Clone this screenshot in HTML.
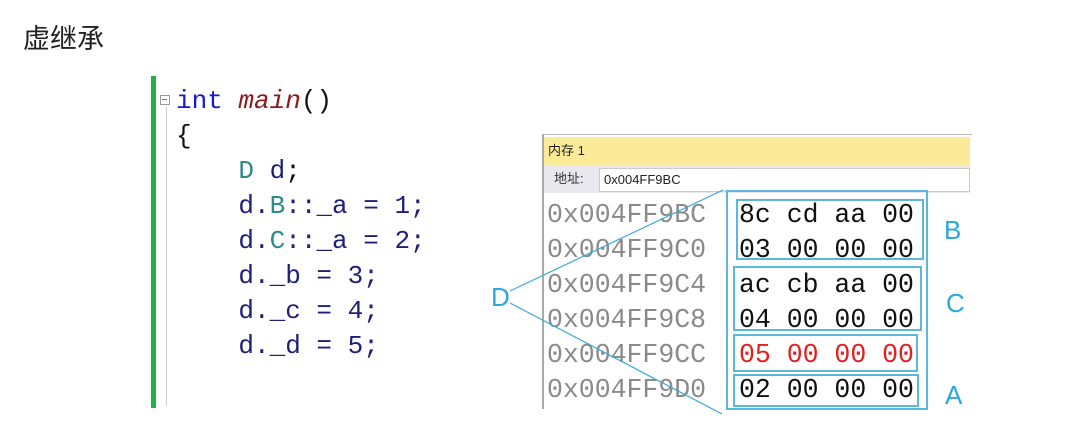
<!DOCTYPE html>
<html><head><meta charset="utf-8"><style>
body{margin:0;width:1066px;height:438px;background:#fff;position:relative;overflow:hidden;font-family:"Liberation Sans","Noto Sans CJK SC",sans-serif}
.a{position:absolute;white-space:pre}
.code{font-family:"Liberation Mono",monospace;font-size:26px;line-height:35px;color:#1f1f7a}
.mem{font-family:"Liberation Mono",monospace;font-size:26.5px;line-height:35px}
.box{position:absolute;border:2px solid #5bb8dc;box-sizing:border-box}
.lbl{position:absolute;color:#29a8e0;font-size:26px;font-family:"Liberation Sans",sans-serif}
</style></head><body>
<div class="a" style="left:23px;top:17px;font-size:27px;color:#222">虚继承</div>
<div class="a" style="left:151px;top:76px;width:5px;height:332px;background:#22b14c"></div>
<div class="a" style="left:166px;top:106px;width:1px;height:300px;background:#ccc"></div>
<div class="a" style="left:160px;top:95px;width:8px;height:8px;border:1px solid #999;background:#fff"></div>
<div class="a" style="left:162px;top:99px;width:5px;height:1px;background:#777"></div>
<div class="a code" style="left:176px;top:84px"><span style="color:#1a1acc">int</span> <i style="color:#8b1a1a">main</i><span style="color:#111">()</span>
<span style="color:#111">{</span>
    <span style="color:#2b8a8a">D</span> d<span style="color:#111">;</span>
    d.<span style="color:#2b8a8a">B</span>::_a = 1;
    d.<span style="color:#2b8a8a">C</span>::_a = 2;
    d._b = 3;
    d._c = 4;
    d._d = 5;</div>
<div class="a" style="left:542px;top:134px;width:428px;height:274px;border-left:2px solid #aaa;border-top:1px solid #bbb;background:#fff"></div>
<div class="a" style="left:544px;top:137px;width:426px;height:28px;background:#fbeb98;font-size:13px;line-height:28px;padding-left:4px;box-sizing:border-box;font-family:'Liberation Sans','Noto Sans CJK SC',sans-serif;color:#222">内存 1</div>
<div class="a" style="left:544px;top:165px;width:426px;height:28px;background:#e8e8ee;font-size:13px;line-height:28px;padding-left:10px;box-sizing:border-box;color:#333">地址:</div>
<div class="a" style="left:599px;top:168px;width:371px;height:24px;background:#fff;border:1px solid #ccc;font-size:13px;line-height:22px;padding-left:4px;box-sizing:border-box;color:#222">0x004FF9BC</div>
<div class="a mem" style="left:547px;top:198px;color:#8a8a8a">0x004FF9BC
0x004FF9C0
0x004FF9C4
0x004FF9C8
0x004FF9CC
0x004FF9D0</div>
<div class="a mem" style="left:739px;top:198px;color:#111">8c cd aa 00
03 00 00 00
ac cb aa 00
04 00 00 00
<span style="color:#e02020">05 00 00 00</span>
02 00 00 00</div>
<div class="box" style="left:726px;top:190px;width:202px;height:220px"></div>
<div class="box" style="left:736px;top:199px;width:188px;height:61px"></div>
<div class="box" style="left:733px;top:266px;width:189px;height:65px"></div>
<div class="box" style="left:733px;top:334px;width:185px;height:38px"></div>
<div class="box" style="left:733px;top:374px;width:186px;height:33px"></div>
<div class="lbl" style="left:944px;top:215px">B</div>
<div class="lbl" style="left:946px;top:288px">C</div>
<div class="lbl" style="left:945px;top:380px">A</div>
<div class="lbl" style="left:491px;top:282px">D</div>
<svg class="a" style="left:0;top:0" width="1066" height="438"><line x1="510" y1="291" x2="723" y2="190" stroke="#3aa8d4" stroke-width="1.2"/><line x1="510" y1="303" x2="722" y2="414" stroke="#3aa8d4" stroke-width="1.2"/></svg>
</body></html>
